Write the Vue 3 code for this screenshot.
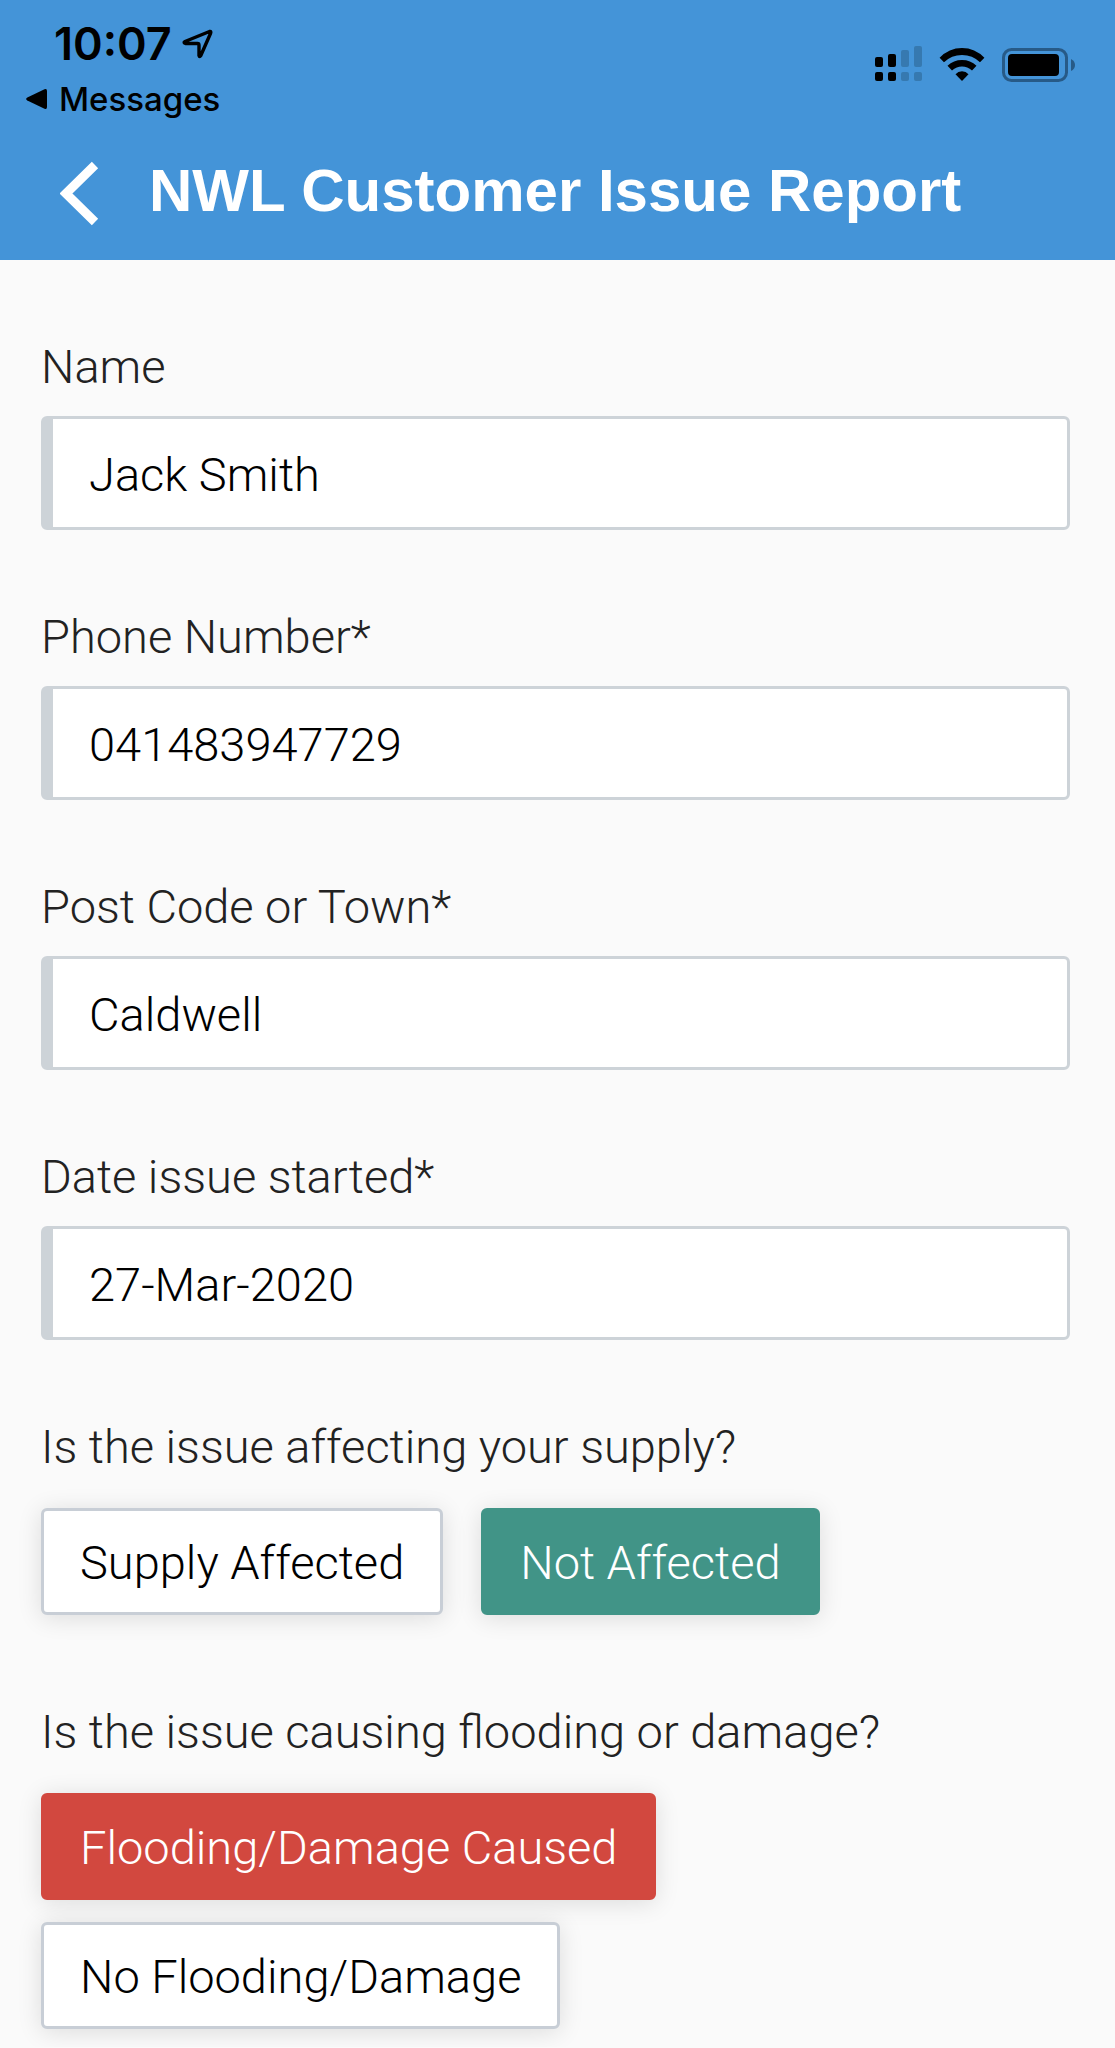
<script setup>
import { reactive } from 'vue'

const fields = reactive([
  { id: 'name', label: 'Name', type: 'text', value: 'Jack Smith' },
  { id: 'phone', label: 'Phone Number*', type: 'tel', value: '041483947729' },
  { id: 'town', label: 'Post Code or Town*', type: 'text', value: 'Caldwell' },
  { id: 'date', label: 'Date issue started*', type: 'text', value: '27-Mar-2020' },
])

const questions = reactive([
  {
    id: 'supply',
    text: 'Is the issue affecting your supply?',
    selected: 'Not Affected',
    options: [
      { text: 'Supply Affected', tone: 'bad' },
      { text: 'Not Affected', tone: 'good' },
    ],
  },
  {
    id: 'damage',
    text: 'Is the issue causing flooding or damage?',
    selected: 'Flooding/Damage Caused',
    options: [
      { text: 'Flooding/Damage Caused', tone: 'bad' },
      { text: 'No Flooding/Damage', tone: 'good' },
    ],
  },
])
</script>

<template>
  <div class="page">
    <header class="header">
      <div class="status">
        <div class="status-left">
          <div class="clock">
            <span>10:07</span>
            <svg class="location" width="32" height="32" viewBox="0 0 32 32" aria-hidden="true">
              <path d="M3 13.500L27.500 3.500Q29.500 3 28.500 5.500L18.800 27.500Q17.500 29.500 17 27.500V17.200Q17 15.500 15.500 15.500H3.500Q1 14.500 3 13.500Z" fill="none" stroke="#000" stroke-width="3.400" stroke-linejoin="round" />
            </svg>
          </div>
          <a class="return" href="#">
            <svg width="21" height="22" viewBox="0 0 21 22" aria-hidden="true">
              <path d="M18.500 1.300Q21 0.300 21 3V19Q21 21.700 18.500 20.700L1.300 12.500Q-1 11 1.300 9.500Z" fill="#000" />
            </svg>
            <span>Messages</span>
          </a>
        </div>
        <div class="status-right">
          <svg width="47" height="36" viewBox="0 0 47 36" aria-hidden="true">
            <g fill="#000">
              <rect x="0" y="11" width="8" height="10" rx="2" />
              <rect x="0" y="26" width="8" height="9" rx="2" />
              <rect x="13" y="8" width="8" height="13" rx="2" />
              <rect x="13" y="26" width="8" height="9" rx="2" />
            </g>
            <g fill="#3679b0">
              <rect x="26" y="4" width="8" height="17" rx="2" />
              <rect x="26" y="26" width="8" height="9" rx="2" />
              <rect x="39" y="0" width="8" height="21" rx="2" />
              <rect x="39" y="26" width="8" height="9" rx="2" />
            </g>
          </svg>
          <svg width="46" height="34" viewBox="0 0 46 34" aria-hidden="true">
            <path d="M.6 9.800Q10 0 23 0T45.400 9.800L41 14.300Q33.500 7 23 7T5 14.300Z" />
            <path d="M8.500 17.800Q14.500 12 23 12T37.500 17.800L33 22.500Q28.500 18.600 23 18.600T13 22.500Z" />
            <path d="M16.500 26.200Q19 23.300 23 23.300T29.500 26.200L23 33Z" />
          </svg>
          <svg width="73" height="34" viewBox="0 0 73 34" aria-hidden="true">
            <rect x="1.500" y="1.500" width="63" height="31" rx="8" fill="none" stroke="#275a87" stroke-width="3" />
            <rect x="6" y="6" width="51" height="22" rx="4" />
            <path d="M69 11Q73 13 73 17T69 23Z" fill="#275a87" />
          </svg>
        </div>
      </div>
      <div class="titlebar">
        <button class="back" type="button" aria-label="Back">
          <svg width="40" height="70" viewBox="0 0 40 70" aria-hidden="true">
            <path d="M35 9L6 37.500L35 66" fill="none" stroke="#fff" stroke-width="9" />
          </svg>
        </button>
        <h1>NWL Customer Issue Report</h1>
      </div>
    </header>

    <form class="form" @submit.prevent>
      <div v-for="field in fields" :key="field.id" class="field">
        <label :for="field.id">{{ field.label }}</label>
        <input :id="field.id" v-model="field.value" :type="field.type" autocomplete="off" />
      </div>

      <div v-for="question in questions" :key="question.id" class="field" role="group" :aria-labelledby="question.id">
        <span :id="question.id" class="question">{{ question.text }}</span>
        <div class="options">
          <button
            v-for="option in question.options"
            :key="option.text"
            type="button"
            class="option"
            :class="question.selected === option.text ? option.tone : ''"
            :aria-pressed="question.selected === option.text"
            @click="question.selected = option.text"
          >{{ option.text }}</button>
        </div>
      </div>
    </form>
  </div>
</template>

<style>
body {
  background: #fafafa;
}
</style>

<style scoped>
.page {
  color: #222;
  font-family: Roboto, "Liberation Sans", sans-serif;
  font-weight: 300;
}

.header {
  background: #4494d8;
}

.status {
  display: flex;
  justify-content: space-between;
  height: 120px;
  padding: 17px 40px 0 26px;
  box-sizing: border-box;
  color: #000;
  font-family: Inter, sans-serif;
}

.status-left {
  display: flex;
  flex-direction: column;
  gap: 6px;
}

.clock {
  display: flex;
  align-items: center;
  gap: 10px;
  padding-left: 28px;
  font-size: 45px;
  font-weight: 600;
  line-height: 54px;
}

.return {
  display: flex;
  align-items: center;
  gap: 12px;
  color: inherit;
  font-size: 33px;
  font-weight: 500;
  line-height: 44px;
  text-decoration: none;
}

.status-right {
  display: flex;
  align-items: flex-end;
  gap: 17px;
  height: 65px;
}

.titlebar {
  display: flex;
  align-items: center;
  gap: 49px;
  height: 140px;
  box-sizing: border-box;
  padding: 2px 60px 0;
}

.back {
  display: flex;
  padding: 0;
  border: 0;
  background: none;
}

h1 {
  margin: 0;
  color: #fff;
  font-family: "Liberation Sans", Arial, sans-serif;
  font-size: 60px;
  font-weight: 700;
  line-height: 72px;
  white-space: nowrap;
}

.form {
  display: flex;
  flex-direction: column;
  gap: 77px;
  padding: 77px 45px 8px 41px;
}

.field {
  display: flex;
  flex-direction: column;
  gap: 19px;
}

label,
.question {
  font-size: 47px;
  line-height: 60px;
}

input {
  width: 100%;
  height: 114px;
  box-sizing: border-box;
  padding: 2px 36px 0;
  border: 3px solid #cdd3d8;
  border-left-width: 12px;
  border-radius: 6px;
  background: #fff;
  color: #000;
  font: inherit;
  font-size: 47px;
}

.options {
  display: flex;
  flex-wrap: wrap;
  gap: 22px 38px;
  padding: 12px 0 10px;
}

.option {
  padding: 22px 36px 19px;
  border: 3px solid #c8ced6;
  border-radius: 6px;
  background: #fff;
  box-shadow: 0 3px 24px rgba(0, 0, 0, 0.12);
  color: #000;
  font: inherit;
  font-size: 47px;
  line-height: 60px;
}

.option.good {
  border-color: #419487;
  background: #419487;
  color: #fff;
}

.option.bad {
  border-color: #d2483f;
  background: #d2483f;
  color: #fff;
}
</style>
